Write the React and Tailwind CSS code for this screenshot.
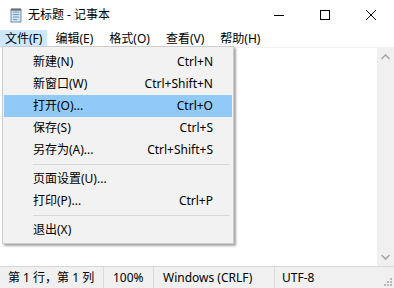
import React from 'react';

const font = { fontFamily: '"Noto Sans", "Noto Sans CJK SC", sans-serif' };

const items = [
  { label: '新建(N)', key: 'Ctrl+N' },
  { label: '新窗口(W)', key: 'Ctrl+Shift+N' },
  { label: '打开(O)...', key: 'Ctrl+O', active: true },
  { label: '保存(S)', key: 'Ctrl+S' },
  { label: '另存为(A)...', key: 'Ctrl+Shift+S' },
  { sep: true },
  { label: '页面设置(U)...', key: '' },
  { label: '打印(P)...', key: 'Ctrl+P' },
  { sep: true },
  { label: '退出(X)', key: '' },
];

const NotepadIcon = () => (
  <svg width="16" height="16" viewBox="0 0 16 16">
    <rect x="3" y="2.5" width="10" height="12.5" fill="#cfe3f3" stroke="#6f8ea8" />
    <path d="M5 5h6M5 7.5h6M5 10h6M5 12.5h4" stroke="#7a9cb8" strokeWidth="1" />
    <path d="M4 1v3M6 1v3M8 1v3M10 1v3M12 1v3" stroke="#555" strokeWidth="1" />
  </svg>
);

const App = () => {
  return (
    <div className="w-[394px] h-[288px] bg-white flex flex-col relative overflow-hidden text-[12px] text-black" style={font}>
      {/* Title bar */}
      <div className="h-[30px] flex items-center shrink-0">
        <div className="pl-[8px] pr-[4px] flex items-center"><NotepadIcon /></div>
        <span className="text-[12px] flex-1">无标题 - 记事本</span>
        <div className="w-[46px] h-[30px] flex items-center justify-center">
          <div className="w-[10px] h-px bg-black" />
        </div>
        <div className="w-[46px] h-[30px] flex items-center justify-center">
          <div className="w-[10px] h-[10px] border border-black" />
        </div>
        <div className="w-[46px] h-[30px] flex items-center justify-center">
          <svg width="10" height="10" viewBox="0 0 10 10"><path d="M0 0L10 10M10 0L0 10" stroke="#000" strokeWidth="1" /></svg>
        </div>
      </div>

      {/* Menu bar */}
      <div className="h-[17px] flex items-center shrink-0">
        <div className="h-full px-[5px] bg-[#cce8ff] flex items-center">文件(F)</div>
        <div className="px-[8px]">编辑(E)</div>
        <div className="px-[8px]">格式(O)</div>
        <div className="px-[8px]">查看(V)</div>
        <div className="px-[8px]">帮助(H)</div>
      </div>

      {/* Editor area */}
      <div className="flex-1 flex border-t border-[#f0f0f0]">
        <div className="flex-1" />
        <div className="w-[17px] bg-[#f0f0f0] flex flex-col justify-between items-center py-[6px]">
          <svg width="9" height="6" viewBox="0 0 9 6"><path d="M0.5 5L4.5 1L8.5 5" stroke="#a3a3a3" strokeWidth="1.5" fill="none" /></svg>
          <svg width="9" height="6" viewBox="0 0 9 6"><path d="M0.5 1L4.5 5L8.5 1" stroke="#a3a3a3" strokeWidth="1.5" fill="none" /></svg>
        </div>
      </div>

      {/* Status bar */}
      <div className="h-[22px] bg-[#f0f0f0] border-t border-[#d7d7d7] flex items-center shrink-0 relative">
        <div className="w-[104px] pl-[8px] border-r border-[#dadada] h-full flex items-center">第 1 行，第 1 列</div>
        <div className="w-[50px] pl-[9px] border-r border-[#dadada] h-full flex items-center">100%</div>
        <div className="w-[121px] pl-[9px] border-r border-[#dadada] h-full flex items-center">Windows (CRLF)</div>
        <div className="pl-[7px]">UTF-8</div>
        <svg className="absolute right-[2px] bottom-[2px]" width="10" height="10" viewBox="0 0 10 10" fill="#b8b8b8">
          <rect x="8" y="2" width="2" height="2" />
          <rect x="5" y="5" width="2" height="2" />
          <rect x="8" y="5" width="2" height="2" />
          <rect x="2" y="8" width="2" height="2" />
          <rect x="5" y="8" width="2" height="2" />
          <rect x="8" y="8" width="2" height="2" />
        </svg>
      </div>

      {/* File dropdown */}
      <div className="absolute left-[2px] top-[46px] w-[232px] bg-[#f2f2f2] border border-[#cccccc] pt-[4px] pb-[2px] shadow-[2px_2px_2px_rgba(0,0,0,0.35)]">
        {items.map((it, i) =>
          it.sep ? (
            <div key={i} className="h-[7px] flex items-center pl-[30px] pr-[3px]">
              <div className="h-px w-full bg-[#d7d7d7]" />
            </div>
          ) : (
            <div
              key={i}
              className={`h-[22px] mx-[1px] flex items-center justify-between pl-[29px] pr-[19px] ${it.active ? 'bg-[#91c9f7]' : ''}`}
            >
              <span>{it.label}</span>
              <span>{it.key}</span>
            </div>
          )
        )}
      </div>
    </div>
  );
};

export default App;
